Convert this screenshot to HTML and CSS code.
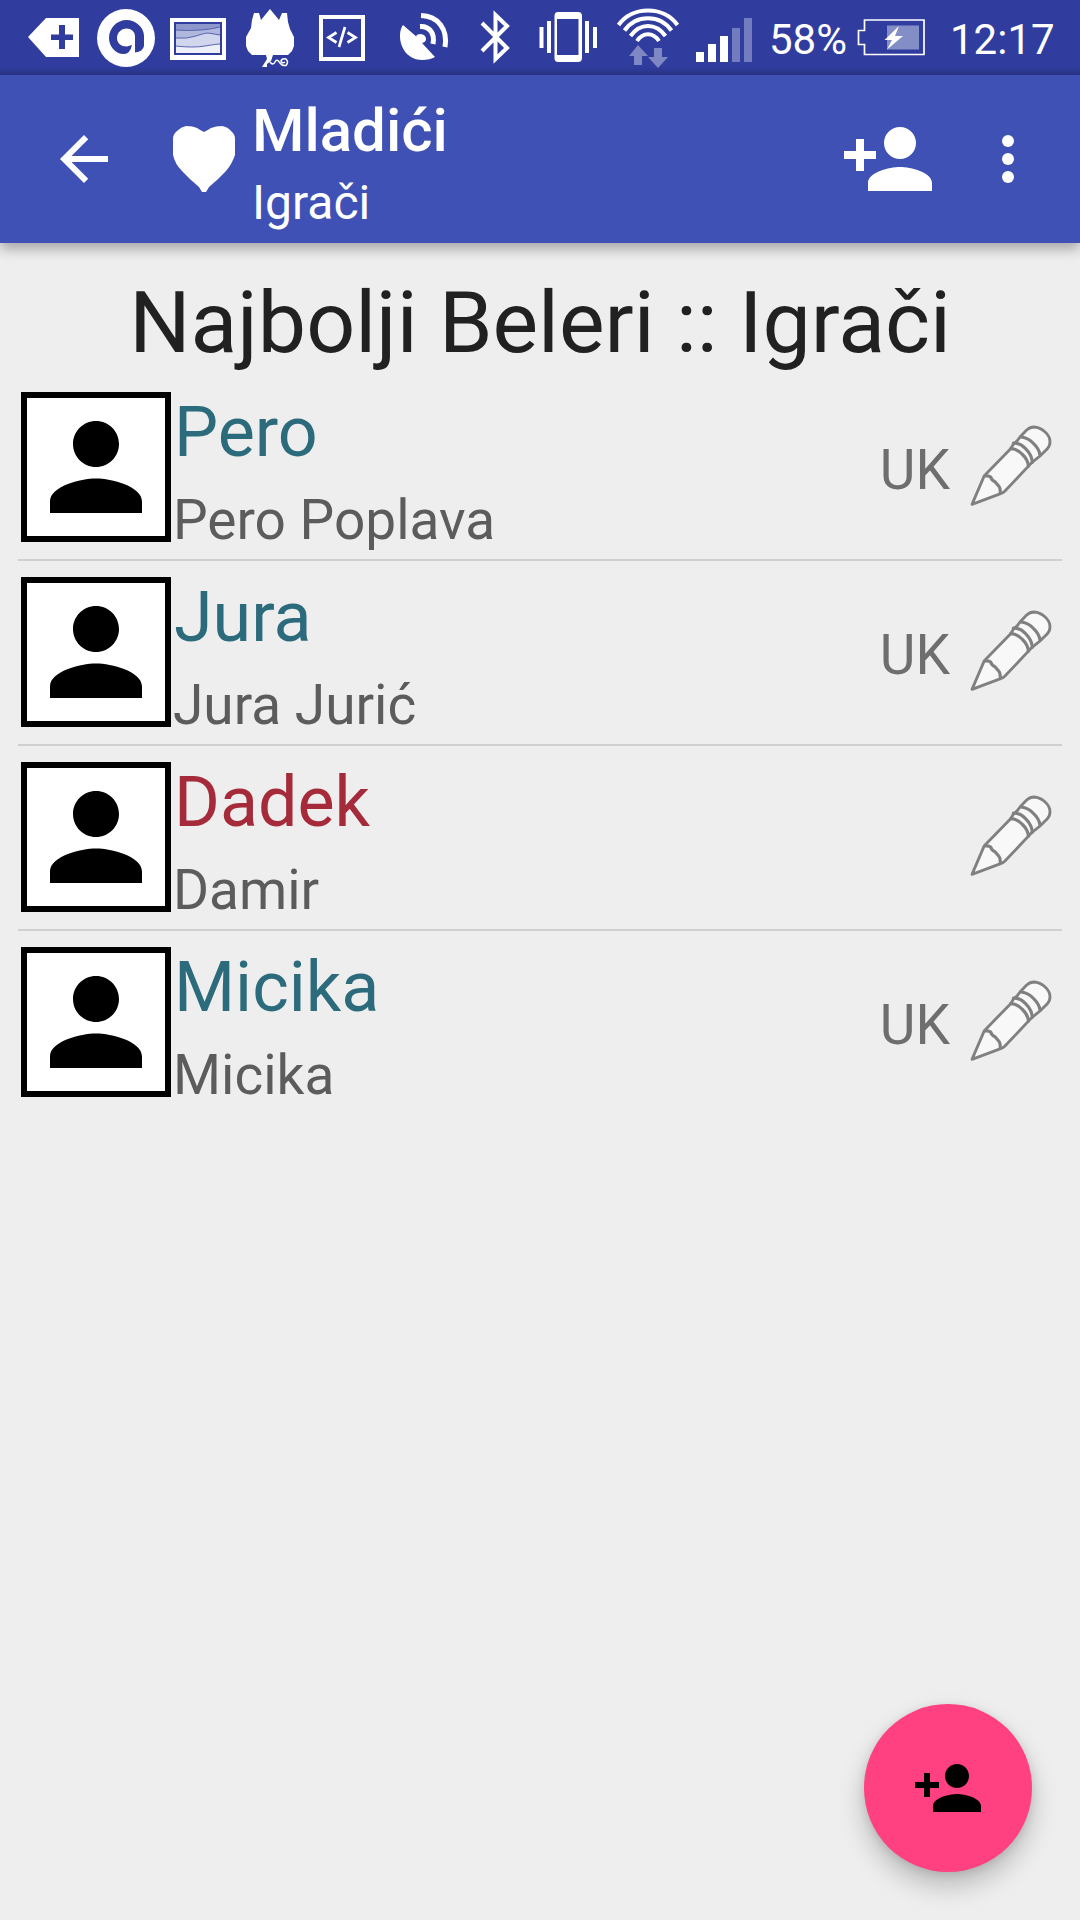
FILE: index.html
```html
<!DOCTYPE html>
<html lang="hr">
<head>
<meta charset="utf-8">
<title>Mladići – Igrači</title>
<link rel="stylesheet" href="styles.css">
</head>
<body>
<svg class="defs" aria-hidden="true">
  <symbol id="person" viewBox="0 0 24 24"><path d="M12 12c2.21 0 4-1.79 4-4s-1.79-4-4-4-4 1.79-4 4 1.79 4 4 4zm0 2c-2.67 0-8 1.34-8 4v2h16v-2c0-2.66-5.33-4-8-4z"/></symbol>
  <symbol id="person-add" viewBox="0 0 24 24"><path d="M15 12c2.21 0 4-1.79 4-4s-1.79-4-4-4-4 1.79-4 4 1.79 4 4 4zm-9-2V7H4v3H1v2h3v3h2v-3h3v-2H6zm9 4c-2.67 0-8 1.34-8 4v2h16v-2c0-2.66-5.33-4-8-4z"/></symbol>
  <symbol id="pencil" viewBox="0 0 300 300">
    <g fill="#f8f8f8" stroke="#808080" stroke-width="8.500" stroke-linejoin="round" stroke-linecap="round">
      <path d="M36 268L73 182L152 101L160 88L172 77L180 66L200 45Q210 36 222 36C245 37 270 58 270 80Q270 93 262 101L240 123L230 131L214 144L204 155L135 228Q128 235 122 236Z"/>
      <path fill="none" stroke-width="9.500" d="M75 183Q86 181 92 186Q95 196 105 200L116 213Q121 218 121 233M152 101Q170 101 186 117Q205 135 205 154M160 84Q180 84 196 100Q216 120 217 142M182 66Q202 67 218 83Q238 102 240 120"/>
    </g>
  </symbol>
</svg>

<div class="status-bar">
  <svg class="icon tag" viewBox="27 0 53 75"><path fill="#fff" d="M28 37L46 18H79V57H46Z"/><path class="cut" d="M51 34.500H59V25H65V34.500H73V40H65V49H59V40H51Z"/></svg>
  <svg class="icon swirl" viewBox="96 0 60 75"><circle cx="126" cy="38" r="29" fill="#fff"/><path class="cut" d="M126.500 20C135.500 20 144 27 144 36V46Q143 51.500 135 52.500V36Q134 28.500 126.500 28.500C121 28.500 117 33 117 38C117 43 121 46.500 127 46.500L132 45Q130 54 124 54C115 54 109 46 109 38C109 28 117 20 126.500 20Z"/></svg>
  <svg class="icon photo" viewBox="170 0 56 75"><path fill="#fff" d="M170 18H226V60H170Z"/><path class="cut" d="M174 22H222V55H174Z"/><path fill="#8e97cc" d="M176 24H220V53H176Z"/><path fill="#b0b7dd" d="M176 30Q189 31 201 30T220 27V53H176Z"/><path fill="#d2d6ed" d="M176 38Q187 39 196 36T208 33L220 35V53H176Z"/><path fill="#edf0f9" d="M176 46Q193 48 205 46T220 44V53H176Z"/><path fill="none" stroke="#5965b1" d="M176 30Q189 31 201 30T220 27M176 38Q187 39 196 36T208 33L220 35M176 46Q193 48 205 46T220 44"/></svg>
  <svg class="icon tree" viewBox="245 0 50 75"><path fill="#fff" d="M254 13H259L261 20L270 9L279 20L282 13H287L288 22L290 29L294 37V46L292 51L288 55H273L271 61L267 64V67H262L267 59L266 55H252L248 51L246 46V37L251 28L252 20Z"/><path fill="none" stroke="#fff" stroke-width="1.500" d="M270 62Q273 66 275 62T280 63Q282 66 286 65.500Q289 62 286 59Q282 58 281 61Q282 64 285 62"/></svg>
  <svg class="icon code" viewBox="319 0 46 75"><rect x="321" y="17" width="42" height="42" fill="none" stroke="#fff" stroke-width="4"/><path fill="none" stroke="#fff" stroke-width="2.700" d="M336.500 32.500L328.500 37.500L336.500 42.500M347.500 32.500L355.500 37.500L347.500 42.500M345 27L339 47"/></svg>
  <svg class="icon dish" viewBox="400 0 50 75"><path fill="#fff" d="M403 25L418 38L416 36Q417 34 421 34Q426 35 426 39Q426 42 422 43L435 57Q430 60 422 60C409 60 400 49 400 36Q400 29 403 25Z"/><path fill="none" stroke="#fff" stroke-width="5" d="M420 26.500C430 26 435 34 433 44"/><path fill="none" stroke="#fff" stroke-width="5" d="M421 15.500C438 16 448 29 445 47"/></svg>
  <svg class="icon bluetooth" viewBox="480 0 30 75"><path fill="none" stroke="#fff" stroke-width="4" d="M482 23L507 48L495.500 59V15L507 26L482 51"/></svg>
  <svg class="icon vibrate" viewBox="539 0 59 75"><path fill="#fff" fill-rule="evenodd" d="M558 12H578Q582 12 582 16V58Q582 62 578 62H558Q554.500 62 554.500 58V16Q554.500 12 558 12ZM557 19V55H578.500V19ZM539.500 27H543.500V48H539.500ZM547 21H551V53H547ZM585 21H589V53H585ZM593 27H597V48H593Z"/></svg>
  <svg class="icon wifi" viewBox="616 0 64 75"><path fill="none" stroke="#fff" stroke-width="4" d="M618.500 25C632 5.500 664 5.500 677.500 25M624.500 30.500C636 14 660 14 671.500 30.500M630.500 36C640 22.500 656 22.500 665.500 36M637 41C643 32 653 32 659 41"/><path fill="#7e88c3" d="M638 45L648 56H642V65H634V56H629ZM654 48H662V57H668L658 68L648 57H654Z"/></svg>
  <svg class="icon signal" viewBox="696 0 56 75"><path fill="#fff" d="M696 52H704V62H696ZM708 44H716V62H708ZM720 36H728V62H720Z"/><path fill="#727cbe" d="M732 28H740V62H732ZM744 18H752V62H744Z"/></svg>
  <span class="percent">58%</span>
  <svg class="icon battery" viewBox="857 0 69 75"><path fill="#838dc6" d="M887 25.500H919V49.500H887Z"/><path fill="none" stroke="#fff" stroke-width="1.700" d="M864.500 20H924V54.500H864.500V44.500H858.500V30.500H864.500Z"/><path fill="#fff" d="M899 26L884.500 40H892L887 49.500L903 36H895Z"/></svg>
  <span class="clock">12:17</span>
</div>

<header class="toolbar">
  <svg class="back" viewBox="0 0 24 24"><path d="M20 11H7.830l5.590-5.590L12 4l-8 8 8 8 1.410-1.410L7.830 13H20v-2z"/></svg>
  <svg class="heart" viewBox="0 0 62 66"><path d="M31 6Q35 4 38 2Q43 0 49 0Q55 1 58 5Q62 8 62 13V29Q59 38 53 45L44 54L36 61L33 66H29L26 61L18 54L9 45Q2 38 0 29V13Q0 8 4 5Q8 1 13 0Q20 0 24 2Q27 4 31 6Z"/></svg>
  <div class="titles">
    <div class="title">Mladići</div>
    <div class="subtitle">Igrači</div>
  </div>
  <svg class="add"><use href="#person-add"/></svg>
  <svg class="more" viewBox="0 0 24 24"><circle cx="12" cy="6" r="2"/><circle cx="12" cy="12" r="2"/><circle cx="12" cy="18" r="2"/></svg>
</header>

<main>
  <h1>Najbolji Beleri :: Igrači</h1>
  <ul class="players">
    <li>
      <svg class="avatar"><use href="#person"/></svg>
      <div class="who"><div class="nick">Pero</div><div class="name">Pero Poplava</div></div>
      <span class="tagged">UK</span><svg class="edit"><use href="#pencil"/></svg>
    </li>
    <li>
      <svg class="avatar"><use href="#person"/></svg>
      <div class="who"><div class="nick">Jura</div><div class="name">Jura Jurić</div></div>
      <span class="tagged">UK</span><svg class="edit"><use href="#pencil"/></svg>
    </li>
    <li>
      <svg class="avatar"><use href="#person"/></svg>
      <div class="who"><div class="nick red">Dadek</div><div class="name">Damir</div></div>
      <svg class="edit"><use href="#pencil"/></svg>
    </li>
    <li>
      <svg class="avatar"><use href="#person"/></svg>
      <div class="who"><div class="nick">Micika</div><div class="name">Micika</div></div>
      <span class="tagged">UK</span><svg class="edit"><use href="#pencil"/></svg>
    </li>
  </ul>
</main>

<button class="fab" aria-label="Dodaj igrača"><svg><use href="#person-add"/></svg></button>
</body>
</html>
```
FILE: styles.css
```css
* { box-sizing: border-box; }

body {
  margin: 0;
  height: 1920px;
  overflow: hidden;
  display: flex;
  flex-direction: column;
  background: #eee;
  font-family: Roboto, sans-serif;
  color: #212121;
}

svg { display: block; flex: none; }
.defs { position: absolute; width: 0; height: 0; }

.status-bar {
  height: 75px;
  flex: none;
  display: flex;
  align-items: center;
  background: linear-gradient(#303d9e 0, #303d9e 67px, #2a3588 75px);
  color: #fff;
  font-size: 42px;
  line-height: 75px;
}
.icon { height: 75px; }
.cut { fill: #303d9e; }
.tag { width: 53px; margin-left: 27px; }
.swirl { width: 60px; margin-left: 16px; }
.photo { width: 56px; margin-left: 14px; }
.tree { width: 50px; margin-left: 19px; }
.code { width: 46px; margin-left: 24px; }
.dish { width: 50px; margin-left: 35px; }
.bluetooth { width: 30px; margin-left: 30px; }
.vibrate { width: 59px; margin-left: 29px; }
.wifi { width: 64px; margin-left: 18px; }
.signal { width: 56px; margin-left: 16px; }
.percent { width: 88px; margin-left: 17px; padding-top: 3px; }
.battery { width: 69px; }
.clock { margin-left: 24px; padding-top: 3px; }

.toolbar {
  height: 168px;
  flex: none;
  display: flex;
  align-items: center;
  padding: 0 36px 0 48px;
  background: #3f51b5;
  box-shadow: 0 6px 12px rgba(0, 0, 0, .3);
  color: #fff;
  fill: #fff;
}
.back, .more { width: 72px; height: 72px; }
.heart { width: 62px; height: 66px; margin-left: 53px; }
.titles { flex: 1; margin-left: 17px; padding-top: 9px; }
.title { font-size: 60px; font-weight: 500; line-height: 76px; }
.subtitle { padding-top: 2px; font-size: 48px; line-height: 64px; }
.add { width: 96px; height: 96px; margin-right: 36px; }

h1 {
  margin: 0;
  padding-top: 23px;
  height: 140px;
  font-size: 86px;
  font-weight: 400;
  line-height: 114px;
  text-align: center;
}

.players { margin: 0 18px; padding: 0; list-style: none; }
.players li {
  height: 185px;
  display: flex;
  align-items: flex-start;
  padding: 9px 2px 0 3px;
}
.players li:not(:last-child) { border-bottom: 2px solid #d0d0d0; }
.players li + li { padding-top: 16px; }
.players li:first-child { height: 178px; }
.avatar { width: 150px; height: 150px; border: 6px solid #000; background: #fff; }
.who { flex: 1; margin-left: 2px; }
.nick { height: 90px; padding-left: 1px; font-size: 70px; line-height: 80px; color: #2c6b7c; }
.red { color: #a52a3a; }
.name { font-size: 55px; line-height: 76px; color: #5c5c5c; }
.tagged { margin-right: 10px; font-size: 55px; line-height: 156px; color: #6e6e6e; }
.edit { width: 100px; height: 100px; margin-top: 23px; }

.fab {
  position: absolute;
  left: 864px;
  top: 1704px;
  width: 168px;
  height: 168px;
  display: flex;
  align-items: center;
  justify-content: center;
  padding: 0;
  border: 0;
  border-radius: 50%;
  background: #ff4081;
  box-shadow: 0 14px 26px rgba(0, 0, 0, .22), 0 2px 10px rgba(0, 0, 0, .1);
}
.fab svg { width: 72px; height: 72px; }
```
